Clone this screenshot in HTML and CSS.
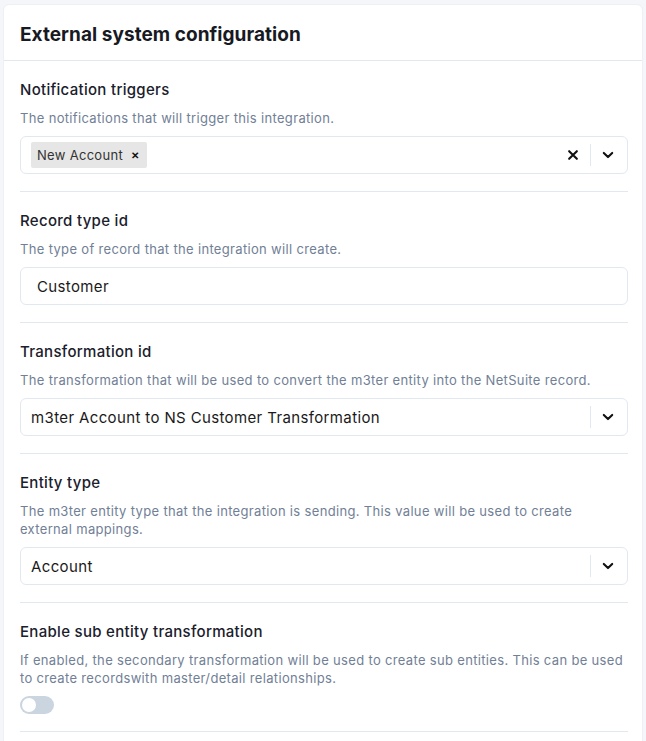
FILE: index.html
```html
<!DOCTYPE html>
<html lang="en">

<head>
    <meta charset="UTF-8">
    <meta name="viewport" content="width=device-width, initial-scale=1.0">
    <title>External system configuration</title>
    <link rel="stylesheet" href="styles.css">
</head>

<body>

    <div class="card">
        <header class="card-header">
            <h1>External system configuration</h1>
        </header>

        <div class="field">
            <label>Notification triggers</label>
            <p class="hint">The notifications that will trigger this integration.</p>
            <div class="select">
                <div class="select-value">
                    <span class="tag">New Account <span class="tag-x">&#x2715;</span></span>
                </div>
                <div class="select-icons">
                    <svg class="icon" viewBox="0 0 20 20" width="14" height="14"><path d="M4.5 4.5l11 11M15.5 4.5l-11 11" stroke="#111" stroke-width="3" stroke-linecap="round"/></svg>
                    <span class="sep"></span>
                    <svg class="icon" viewBox="0 0 20 20" width="14" height="14"><path d="M4 7l6 6 6-6" fill="none" stroke="#111" stroke-width="3" stroke-linecap="round" stroke-linejoin="round"/></svg>
                </div>
            </div>
        </div>

        <div class="field">
            <label>Record type id</label>
            <p class="hint">The type of record that the integration will create.</p>
            <div class="input">Customer</div>
        </div>

        <div class="field">
            <label>Transformation id</label>
            <p class="hint">The transformation that will be used to convert the m3ter entity into the NetSuite record.</p>
            <div class="select">
                <div class="select-value">m3ter Account to NS Customer Transformation</div>
                <div class="select-icons">
                    <span class="sep"></span>
                    <svg class="icon" viewBox="0 0 20 20" width="14" height="14"><path d="M4 7l6 6 6-6" fill="none" stroke="#111" stroke-width="3" stroke-linecap="round" stroke-linejoin="round"/></svg>
                </div>
            </div>
        </div>

        <div class="field">
            <label>Entity type</label>
            <p class="hint">The m3ter entity type that the integration is sending. This value will be used to create external mappings.</p>
            <div class="select">
                <div class="select-value">Account</div>
                <div class="select-icons">
                    <span class="sep"></span>
                    <svg class="icon" viewBox="0 0 20 20" width="14" height="14"><path d="M4 7l6 6 6-6" fill="none" stroke="#111" stroke-width="3" stroke-linecap="round" stroke-linejoin="round"/></svg>
                </div>
            </div>
        </div>

        <div class="field">
            <label>Enable sub entity transformation</label>
            <p class="hint">If enabled, the secondary transformation will be used to create sub entities. This can be used to create recordswith master/detail relationships.</p>
            <span class="toggle"><span class="knob"></span></span>
        </div>
    </div>

</body>

</html>
```

FILE: styles.css
```css
* {
    margin: 0;
    padding: 0;
    box-sizing: border-box;
}

body {
    font-family: 'Inter', 'Noto Sans', sans-serif;
    background-color: #f4f6f9;
    color: #1a202c;
    padding: 4px 3px 0 3px;
}

.card {
    background: #fff;
    border: 1px solid #edf0f4;
    border-radius: 6px;
    padding: 0 14px 0 16px;
    min-height: 760px;
}

.card-header {
    height: 56px;
    display: flex;
    align-items: center;
    border-bottom: 1px solid #e2e8f0;
    margin: 0 -14px 0 -16px;
    padding: 4px 0 0 16px;
}

.card-header h1 {
    font-size: 19px;
    font-weight: 700;
    color: #171923;
    letter-spacing: 0.05px;
}

.field {
    padding: 18px 0 17px;
    border-bottom: 1px solid #e2e8f0;
}

.field label {
    display: block;
    font-size: 15px;
    line-height: 22px;
    font-weight: 450;
    color: #1a202c;
    letter-spacing: 0.3px;
}

.hint {
    margin-top: 8px;
    font-size: 13px;
    line-height: 18px;
    color: #718096;
    letter-spacing: 0.33px;
}

.input,
.select {
    margin-top: 9px;
    height: 38px;
    border: 1px solid #e2e8f0;
    border-radius: 6px;
    font-size: 15px;
    color: #1a1a1a;
    letter-spacing: 0.37px;
}

.input {
    display: flex;
    align-items: center;
    padding-left: 16px;
}

.select {
    display: flex;
    align-items: center;
}

.select-value {
    flex: 1;
    padding-left: 10px;
    display: flex;
    align-items: center;
}

.tag {
    display: inline-flex;
    align-items: center;
    height: 26px;
    padding: 0 6px 0 6px;
    background: #e6e6e6;
    border-radius: 2px;
    font-size: 13px;
    color: #333;
    letter-spacing: 0.3px;
}

.tag-x {
    font-size: 10px;
    font-weight: 700;
    margin-left: 8px;
    margin-right: 2px;
    color: #111;
}

.select-icons {
    display: flex;
    align-items: center;
    padding-right: 12px;
}

.select-icons .icon:first-child {
    margin-right: 10px;
}

.sep {
    width: 1px;
    height: 22px;
    background: #e2e8f0;
    margin-right: 10px;
}

.toggle {
    display: block;
    position: relative;
    width: 34px;
    height: 18px;
    margin-top: 9px;
    border-radius: 9px;
    background: #cbd5e0;
}

.knob {
    position: absolute;
    top: 2px;
    left: 2px;
    width: 14px;
    height: 14px;
    border-radius: 50%;
    background: #fff;
}
```
